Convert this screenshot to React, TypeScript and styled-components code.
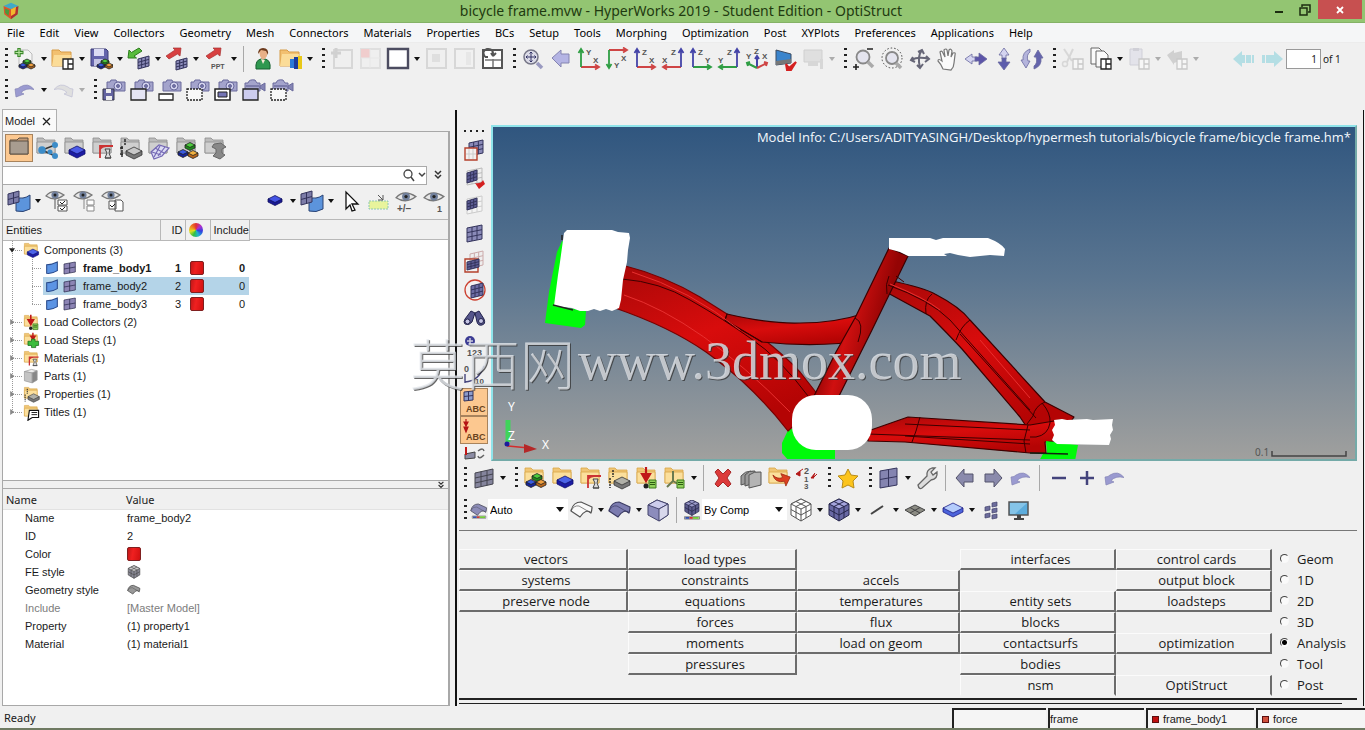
import React from 'react';
import styled, { createGlobalStyle, css } from 'styled-components';

const ui = '"Noto Sans", "Open Sans", sans-serif';
const wide = '"Open Sans", "Noto Sans", sans-serif';
const small = '"Liberation Sans", Arial, sans-serif';

const Global = createGlobalStyle`
  *, *::before, *::after { box-sizing: border-box; }
  body { margin: 0; background: #f0f0f0; color: #1a1a1a; font: 11px/14px ${small}; }
  button, input, select { font: inherit; color: inherit; margin: 0; padding: 0; border: 0; background: none; }
`;

/* ---------- icon building blocks ---------- */

type BlockProps = { x: number; y: number; r: number; d?: number; c: string; side: string; line?: string };
const Block = ({ x, y, r, d = 4, c, side, line = '#222' }: BlockProps) => (
  <g stroke={line} strokeWidth=".8" strokeLinejoin="round">
    <path d={`M${x - r} ${y}v${d}L${x} ${y + r / 2 + d}L${x + r} ${y + d}v${-d}z`} fill={side} />
    <path d={`M${x - r} ${y}L${x} ${y - r / 2}L${x + r} ${y}L${x} ${y + r / 2}z`} fill={c} />
  </g>
);

type PatchProps = { x: number; y: number; w: number; h: number; s?: number; n?: number; fill?: string; line?: string };
const Patch = ({ x, y, w, h, s = 3, n = 3, fill = '#8a8ab8', line = '#34345c' }: PatchProps) => {
  const steps = Array.from({ length: n - 1 }, (_, i) => i + 1);
  return (
    <g stroke={line} strokeWidth="1" fill="none">
      <path d={`M${x} ${y + s}l${w} ${-s}v${h}l${-w} ${s}z`} fill={fill} />
      {steps.map((i) => (
        <path key={i} d={`M${x} ${y + s + (h * i) / n}l${w} ${-s}M${x + (w * i) / n} ${y + s - (s * i) / n}v${h}`} />
      ))}
    </g>
  );
};

const Folder = ({ gray }: { gray?: boolean }) => (
  <g stroke={gray ? '#8d8d8d' : '#d9a648'} strokeWidth=".8">
    <path d="M2 2h6l2 2h10v13H2z" fill={gray ? '#bcbcbc' : '#f0c676'} />
    <path d="M2 6h18v11H2z" fill={gray ? '#cfcfcf' : '#fbdf9c'} />
  </g>
);

const Trio = ({ x, y }: { x: number; y: number }) => (
  <>
    <Block x={x} y={y - 4} r={4} d={2} c="#4ccb3c" side="#1e8a1a" />
    <Block x={x - 4} y={y} r={4} d={2} c="#3a5be0" side="#16249c" />
    <Block x={x + 4} y={y} r={4} d={2} c="#f0a040" side="#b8661a" />
  </>
);

const Camera = ({ video }: { video?: boolean }) => (
  <g stroke="#6a6a9c" strokeWidth="1">
    <path d={video ? 'M3 5h3q1-4 7-3l2 3h3v8H3z' : 'M5 4h3l1-2h5l1 2h8v9H5z'} fill="#a4a4cc" />
    {video && <path d="M18 8l5-3v8l-5-3z" fill="#8484b4" />}
    {video && <path d="M4 8h13" stroke="#55558c" />}
    {!video && <circle cx="16" cy="8" r="4" fill="#d4d4ee" />}
    {!video && <circle cx="16" cy="8" r="1.5" fill="#7474a8" />}
  </g>
);

const Eye = () => (
  <g>
    <path d="M1 7Q8-1 19 6Q10 13 1 7z" fill="#e7e7e7" stroke="#777" strokeWidth="1.2" />
    <circle cx="10" cy="6" r="3.6" fill="#71809c" />
    <circle cx="10" cy="6" r="1.5" fill="#222" />
  </g>
);

const Curl = ({ c = '#9a9ad0' }: { c?: string }) => (
  <path d="M2 11l1 8 8-3-3-1.5q5-5 13-3Q15 4 7 9L5 10.5z" fill={c} stroke="#8484b4" strokeWidth=".7" />
);

const Pane = ({ x = 12, y = 12, c = '#222' }: { x?: number; y?: number; c?: string }) => (
  <path d={`M${x} ${y}h10v10h-10zM${x + 5} ${y}v10M${x + 5} ${y + 5}h5`} fill="#fff" stroke={c} strokeWidth="1.3" />
);

const Note = () => (
  <g>
    <path d="M14 14h7v8h-7z" fill="#8fd05a" stroke="#3c7a1c" />
    <path d="M15 16.5h5M15 18.5h5" stroke="#2c5c12" />
  </g>
);

const Steel = () => (
  <g fill="none">
    <path d="M9 22V10h13M9 13q2-3 6-3" stroke="#c33" strokeWidth="1.8" />
    <path d="M14 22h6M14 13h5l-1 4 2 5h-6l2-5z" stroke="#444" fill="#ddd" />
  </g>
);

const glyph = { fontFamily: 'Liberation Sans', fontWeight: 700, fill: '#555' } as const;

type AxesProps = { h: string; v: string; hl: string; vl: string; left?: boolean; down?: boolean };
const Axes = ({ h, v, hl, vl, left, down }: AxesProps) => {
  const x0 = left ? 20 : 4;
  const y0 = down ? 3 : 20;
  const x1 = left ? 2 : 22;
  const y1 = down ? 21 : 2;
  const dx = left ? 4 : -4;
  const dy = down ? -4 : 4;
  return (
    <g fill="none" strokeWidth="1.8">
      <path d={`M${x0} ${y0}H${x1}M${x1 + dx} ${y0 - 2.5}L${x1} ${y0}L${x1 + dx} ${y0 + 2.5}`} stroke={h} />
      <path d={`M${x0} ${y0}V${y1}M${x0 - 2.5} ${y1 + dy}L${x0} ${y1}L${x0 + 2.5} ${y1 + dy}`} stroke={v} />
      <text x={left ? 1 : 16} y={down ? 14 : 16} fontSize="8" {...glyph}>{hl}</text>
      <text x={left ? 10 : 9} y={down ? 21 : 8} fontSize="8" {...glyph}>{vl}</text>
    </g>
  );
};

const R = '#cf4545';
const G = '#2f9e44';
const B = '#4444a8';

const CubeGrid = ({ fill, top, line = '#26264a' }: { fill: string; top: string; line?: string }) => (
  <g stroke={line} strokeWidth="1" strokeLinejoin="round">
    <path d="M2 6l10-5 10 5v11l-10 6-10-6z" fill={fill} />
    <path d="M2 6l10-5 10 5-10 5z" fill={top} />
    <path d="M12 11v12M7 3.5l10 5V20M17 3.5l-10 5V20M2 11.500l10 5.500 10-5.500" fill="none" />
  </g>
);

const Sheet = ({ fill, line }: { fill: string; line: string }) => (
  <g stroke={line} strokeWidth="1.200" strokeLinejoin="round">
    <path d="M1 13Q3 4 11 4l11 5q0 3-1 6Q16 10 10 19z" fill={fill} />
    <path d="M1 13Q4 7 9 8l12 7" fill="none" strokeWidth=".7" />
  </g>
);

const Binding = () => (
  <g>
    <path d="M3 20h18v3H3z" fill="#eee" stroke="#333" strokeWidth=".6" />
    <path d="M4 21.500h5" stroke="#24a" strokeWidth="2" />
    <path d="M9 21.500h4" stroke="#c22" strokeWidth="2" />
    <path d="M13 21.500h7" stroke="#6c2" strokeWidth="2" />
  </g>
);

const icons: Record<string, React.ReactNode> = {
  logo: <g><path d="M3 6l9-4 9 4-9 4z" fill="#3fa9c8" /><path d="M3 6l9 4v12l-8-6z" fill="#e0522a" /><path d="M21 6l-9 4v12l8-6z" fill="#b03030" /><path d="M12 10l6-3-1 8-5 3z" fill="#f2b72e" /><path d="M5 9l5 2-1 7-4-4z" fill="#4a9a3c" /></g>,
  new: <g><path d="M6 3h9l4 4v14H6z" fill="#f4f4f4" stroke="#bbb" /><path d="M6 1v9M1.5 5.5h9" stroke="#3c8a2c" strokeWidth="3.4" /><path d="M6 2v7M2.5 5.5h7" stroke="#b4e49c" strokeWidth="1.2" /><Trio x={14} y={18} /></g>,
  open: <g><path d="M1 3h7l2 2h10v14H1z" fill="#f2c070" stroke="#d79c46" /><path d="M3 8h17l-2 11H1z" fill="#fbdc98" /><Pane /></g>,
  save: <g><path d="M2 2h15l2 2v15H2z" fill="#6464ac" stroke="#3c3c78" /><path d="M5 2h10v7H5z" fill="#dcdcf4" /><path d="M5 12h9v7H5z" fill="#c4c4e4" /><Trio x={16} y={18} /></g>,
  import: <g><Patch x={11} y={9} w={11} h={10} /><path d="M1 11l1-8 2.5 2.5L12 1l3 3-8 5 2.5 2z" fill="#58bc3c" stroke="#2c7c1c" /></g>,
  export: <g><Patch x={11} y={11} w={11} h={9} /><path d="M1 9l9-6-2-2 8 0-1 8-2.5-2L4 12z" fill="#d84040" stroke="#a83030" strokeWidth=".7" /></g>,
  ppt: <g><path d="M3 9l9-6-2-2 8 0-1 8-2.5-2L6 12z" fill="#d84040" stroke="#a83030" strokeWidth=".7" /><text x="8" y="22" fontSize="7" {...glyph}>PPT</text></g>,
  user: <g><path d="M5 22q-1-9 5-10h4q6 1 5 10z" fill="#2f9850" stroke="#176030" /><path d="M8 4q4-4 8 0v5q-4 7-7 0z" fill="#e8b088" /><path d="M7 7q0-6 5-6 6 0 5 7l-2-4-5-1z" fill="#6c3a1c" /><path d="M10 12l2 5 2-4z" fill="#f8e8d8" /></g>,
  organize: <g><path d="M1 3h7l2 2h10v14H1z" fill="#f2c070" stroke="#d79c46" /><path d="M3 7h17l-2 12H1z" fill="#fbdc98" /><path d="M11 12h4v9h-4z" fill="#2a7ad8" /><path d="M15 10h4v12h-4z" fill="#1c3c9c" /><path d="M19 9h4v13h-4z" fill="#e8c818" /></g>,
  addPage: <g><path d="M4 3h18v18H4z" fill="#eee" stroke="#bbb" strokeWidth="2" /><path d="M6 1v10M1 6h10" stroke="#aaa" strokeWidth="3" /></g>,
  delPage: <g><path d="M3 2h19v19H3z" fill="#eee" stroke="#ccc" strokeWidth="2" /><path d="M3 2h9v9H3z" fill="#f0a4a4" /><path d="M12 2v19M3 11h19" stroke="#ddd" /></g>,
  page: <g><path d="M2 2h20v19H2z" fill="#fff" stroke="#4c4c60" strokeWidth="2.400" /></g>,
  pageLayout: <g><path d="M3 2h19v19H3z" fill="#eee" stroke="#bbb" strokeWidth="2" /><path d="M8 7h8v8H8z" fill="#ccc" /></g>,
  pageSplit: <g><path d="M3 2h19v19H3z" fill="#f4f4f4" stroke="#bbb" strokeWidth="2" /><path d="M14 5h5v13h-5z" fill="#ddd" /></g>,
  swap: <g><path d="M3 3h19v18H3z" fill="#fff" stroke="#555" strokeWidth="2" /><path d="M13 12v8M5 13h16" stroke="#777" strokeWidth="1.500" /><path d="M5 10q-4-6 2-8 7-1 6 7M5 10l3 0M13 9l-2-3M13 9l3-3" fill="none" stroke="#555" strokeWidth="2" /></g>,
  fit: <g><circle cx="10" cy="10" r="7" fill="#dcdce8" stroke="#778" strokeWidth="1.500" /><path d="M16 16l5 5" stroke="#9a9ac0" strokeWidth="3.500" /><path d="M10 5v10M5 10h10M8.500 6.500L10 5l1.500 1.500M8.500 13.500L10 15l1.500-1.500M6.500 8.500L5 10l1.500 1.500M13.500 8.500L15 10l-1.500 1.500" stroke="#336" fill="none" /></g>,
  back: <path d="M3 11l9-8v4h8v9h-8v4z" fill="#b4b4e4" stroke="#8484b0" />,
  xy: <Axes h={R} v={G} hl="X" vl="Y" />,
  xyDown: <Axes h={R} v={G} hl="X" vl="Y" down />,
  xz: <Axes h={R} v={B} hl="X" vl="Z" />,
  xzLeft: <Axes h={R} v={B} hl="X" vl="Z" left />,
  yz: <Axes h={G} v={B} hl="Y" vl="Z" />,
  yzLeft: <Axes h={G} v={B} hl="Y" vl="Z" left />,
  iso: <g fill="none" strokeWidth="2"><path d="M12 20V10" stroke={B} /><path d="M12 21L2 16M3 19l-1-3 3-1" stroke={G} /><path d="M12 21l10-5M19 15l3 1-1 3" stroke={R} /><path d="M10 12l2-3 2 3" stroke={B} /><text x="1" y="12" fontSize="8" {...glyph}>Y</text><text x="9" y="7" fontSize="8" {...glyph}>Z</text><text x="17" y="12" fontSize="8" {...glyph}>X</text></g>,
  view: <g><path d="M3 3l15 4v9L3 18z" fill="#3a84cc" stroke="#3a4a60" /><path d="M3 14l15-2v4L3 18z" fill="#777" /><path d="M13 17l3 4 7-6-5 8h-4z" fill="#d42020" stroke="#d42020" strokeWidth="2" /></g>,
  capture: <g><path d="M3 3h18v12H3z" fill="#ccc" stroke="#aaa" /><path d="M7 15h10v4H7zM19 12h3v10h-3z" fill="#bbb" /></g>,
  zoom: <g><circle cx="11" cy="10" r="6.500" fill="#e4e4ee" stroke="#888" strokeWidth="1.800" /><path d="M16 15l5 5" stroke="#aaa" strokeWidth="3.500" /><path d="M15 2h6M1 20h6M4 17v6" stroke="#222" strokeWidth="1.600" /></g>,
  zoomArea: <g><circle cx="12" cy="11" r="6" fill="#e4e4ee" stroke="#888" strokeWidth="1.800" /><circle cx="12" cy="11" r="10" fill="none" stroke="#444" strokeDasharray="1.500 2" /><path d="M16 16l5 5" stroke="#aaa" strokeWidth="3.500" /></g>,
  rotate: <g fill="none" stroke="#667" strokeWidth="2"><path d="M3 13q8-4 18-1M18 9l3 3-4 3M5 10l-2 3 4 2" /><path d="M14 3q-5 6-2 18M10 5l4-2 2 4M9 18l3 3 3-4" /></g>,
  pan: <path d="M7 22q-2-5-5-8 0-3 4 0L4 5q2-2 3 1l2 4-1-7q2-2 3 0l1 6 1-6q2-2 3 1l-1 6 2-4q3-1 2 2l-1 8q0 4-3 7z" fill="#fafafa" stroke="#777" strokeWidth="1.200" />,
  horiz: <g stroke="#6a6aa0" strokeWidth=".8"><path d="M1 12l7-5v3h5v4H8v3z" fill="#d4d4f0" /><path d="M23 12l-8-6v4h-4v4h4v4z" fill="#5c54a8" /></g>,
  vert: <g stroke="#6a6aa0" strokeWidth=".8"><path d="M12 1l-5 7h3v4h4V8h3z" fill="#d4d4f0" /><path d="M12 23l-6-8h4v-4h4v4h4z" fill="#5c5cac" /></g>,
  spin: <g stroke="#6a6aa0" strokeWidth=".8"><path d="M10 2q-8 3-7 11H1l5 8 4-7H8q-2-6 2-9z" fill="#b4b4dc" /><path d="M14 22q8-3 7-11h2l-5-8-4 7h2q2 6-2 9z" fill="#6464ac" /></g>,
  cut: <g><path d="M3 2l8 12M12 2L6 15" stroke="#bbb" strokeWidth="2" /><circle cx="4" cy="17" r="2.500" fill="none" stroke="#bbb" strokeWidth="1.500" /><Pane c="#999" /></g>,
  copy: <g fill="#fafafa" stroke="#666"><path d="M2 1h8l3 3v13H2z" /><path d="M7 4h8l4 4v12H7z" /><Pane /></g>,
  paste: <g><path d="M3 2h12v16H3z" fill="#d4d4e4" stroke="#aab" /><path d="M6 1h6v3H6z" fill="#aab" /><Pane c="#999" /></g>,
  overlay: <g><path d="M2 8l7-5v3l8-2v9l-8 3v2z" fill="#aaa" /><Pane c="#999" /></g>,
  prev: <g fill="#b4dee4"><path d="M1 12l9-8v4h3v8h-3v4zM14 8h5v8h-5zM20 8h2v8h-2z" /></g>,
  next: <g fill="#b4dee4"><path d="M23 12l-9-8v4H6v8h8v4zM2 8h3v8H2z" /></g>,
  undo: <Curl />,
  redo: <g transform="translate(24 0) scale(-1 1)"><Curl c="#ccc" /></g>,
  camSave: <g><Camera /><path d="M1 11h11v11H1z" fill="#6464a0" stroke="#334" /><path d="M4 11h5v4H4zM4 18h6v4H4z" fill="#eee" /></g>,
  camWin: <g><Camera /><path d="M1 11h15v11H1z" fill="#e4e4f4" stroke="#222" strokeWidth="1.300" /></g>,
  camBar: <g><Camera /><path d="M1 16h14v6H1z" fill="#fff" stroke="#222" strokeWidth="1.300" /></g>,
  camDash: <g><Camera /><path d="M1 11h15v11H1z" fill="#f8f8f8" stroke="#222" strokeDasharray="2 1" strokeWidth="1.300" /></g>,
  camFull: <g><Camera /><path d="M1 11h15v11H1z" fill="#fff" stroke="#222" strokeWidth="1.500" /><path d="M4 14h9v5H4z" fill="#7474b4" stroke="#222" /></g>,
  vidWin: <g><Camera video /><path d="M1 11h15v11H1z" fill="#ccccee" stroke="#222" strokeWidth="1.300" /></g>,
  vidDash: <g><Camera video /><path d="M1 11h15v11H1z" fill="#f8f8f8" stroke="#222" strokeDasharray="2 1" strokeWidth="1.300" /></g>,

  modelView: <g><path d="M3 4h7l2-2h9v16H3z" fill="#c49c78" stroke="#5c5044" /><path d="M3 5h18v13H3z" fill="#a89c90" stroke="#5c5044" /></g>,
  linkView: <g><Folder gray /><path d="M20 9L7 14l13 6" stroke="#333" fill="none" strokeWidth="1.500" /><circle cx="7" cy="14" r="3.800" fill="#3c8cc8" /><circle cx="20" cy="9" r="3" fill="#3c8cc8" /><circle cx="15" cy="16" r="2.500" fill="#3c8cc8" /><circle cx="20" cy="20" r="3" fill="#3c8cc8" /></g>,
  compView: <g><Folder gray /><Block x={14} y={14} r={8} d={4} c="#4c5ce8" side="#1c1ca4" line="#10106c" /></g>,
  matView: <g><Folder gray /><Steel /></g>,
  propView: <g><Folder gray /><path d="M6 3v6M3 10v12M1 12h4M1 18h4" stroke="#222" strokeWidth="1.400" strokeDasharray="3 1" /><Block x={15} y={15} r={8} d={4} c="#c8c8c8" side="#777" line="#333" /></g>,
  meshView: <g><Folder gray /><g fill="#dcdcf4" stroke="#7468b4" strokeWidth="1.200"><path d="M4 16l8-7 10 3-7 8-8 3z" /><path d="M8 12l9 5M13 10l-6 11M18 11l-7 9M5 16l9 3" /></g></g>,
  asmView: <g><Folder gray /><Block x={15} y={9} r={5} d={3} c="#4ccb3c" side="#1e8a1a" /><Block x={8} y={16} r={5} d={3} c="#3a5be0" side="#16249c" /><Block x={18} y={17} r={5} d={3} c="#f0b040" side="#b8661a" /></g>,
  metalView: <g><Folder gray /><path d="M11 8l7-1 5 4-4 2v4l3 2-5 4-7-3 3-3v-4l-4-2z" fill="#888" stroke="#666" /></g>,

  geoMesh: <g><path d="M9 8q7 3 14-2v14q-7 4-14 2z" fill="#5c94dc" stroke="#2c4474" /><Patch x={1} y={2} w={11} h={11} n={2} fill="#7c7ca8" /></g>,
  eyeOn: <g><Eye /><path d="M13 11h9v5h-9zM13 17h9v5h-9zM10 10v10" fill="#fff" stroke="#555" /><path d="M15 13l2 2 3-3M15 19l2 2 3-3" fill="none" stroke="#222" /></g>,
  eyeOff: <g><Eye /><path d="M14 11h7v5h-7zM14 17h7v5h-7zM11 10v10" fill="#fff" stroke="#888" /></g>,
  eyeSwap: <g><Eye /><path d="M8 12h7v8H8zM14 11h6l2 2v9h-8z" fill="#fff" stroke="#555" /><path d="M9 16l2 2 3-3" fill="none" stroke="#222" /></g>,
  comp: <Block x={13} y={10} r={7} d={3} c="#4454e4" side="#181894" line="#10105c" />,
  cursor: <path d="M8 3v17l4-4 2 6 3-1-3-6h6z" fill="#fff" stroke="#111" strokeWidth="1.300" />,
  isolate: <g><path d="M3 12h19v8H3z" fill="#e8f49c" stroke="#8cc8b0" strokeDasharray="2 1" /><path d="M12 6l5 5M17 6v5h-5" stroke="#555" fill="none" /></g>,
  eyePm: <g><g transform="translate(1 1) scale(1.100)"><Eye /></g><text x="3" y="23" fontSize="10" {...glyph}>+/–</text></g>,
  eyeOne: <g><g transform="translate(1 1) scale(1.100)"><Eye /></g><text x="15" y="23" fontSize="9" {...glyph}>1</text></g>,

  maskA: <g><Patch x={7} y={2} w={14} h={13} /><path d="M3 10h12v12H3z" fill="#f4f0f0" stroke="#b4402c" strokeWidth="1.400" /><path d="M7 11v10M11 11v10M4 16h10" stroke="#ccc" /></g>,
  maskB: <g><Patch x={5} y={2} w={15} h={14} fill="#eee" line="#bbb" /><Patch x={5} y={4} w={10} h={10} fill="#5c5c94" /><path d="M13 17q6 1 8-3l2 4-6 5z" fill="#d42020" /></g>,
  maskC: <g><Patch x={5} y={2} w={15} h={15} fill="#f4f4f4" line="#ccc" /><Patch x={5} y={4} w={10} h={9} fill="#5c5c94" /></g>,
  maskD: <Patch x={5} y={3} w={15} h={14} />,
  maskE: <g><Patch x={8} y={1} w={13} h={14} fill="#eee" line="#caa" /><path d="M3 9h13v13H3z" fill="none" stroke="#b4402c" strokeWidth="1.400" /><Patch x={5} y={9} w={12} h={8} fill="#5c5c94" /></g>,
  maskF: <g><circle cx="13" cy="12" r="10" fill="#f4f0f0" stroke="#cc4030" strokeWidth="1.300" /><Patch x={9} y={5} w={12} h={12} fill="#6c6ca4" /></g>,
  find: <g fill="#56568c" stroke="#22224c"><path d="M3 13l6-8 4 2-3 9q-3 4-7 2-2-2 0-5zM13 7l4-2 5 8q2 5-2 6-4 1-5-3z" /><circle cx="5.500" cy="15.500" r="2.500" fill="#c4c4e4" /><circle cx="19" cy="15" r="2.500" fill="#c4c4e4" /></g>,
  number: <g><circle cx="8" cy="7" r="5" fill="#3c3c94" /><path d="M8 4v6M5 7h6" stroke="#ccd" strokeWidth="1.500" /><text x="5" y="22" fontSize="9" {...glyph}>123</text></g>,
  measure: <g><path d="M3 12v9M3 20q14-1 19-16" stroke="#44447c" fill="none" strokeWidth="1.400" /><text x="2" y="10" fontSize="9" {...glyph}>0</text><text x="13" y="22" fontSize="8" {...glyph}>10</text></g>,
  abcMesh: <g><Patch x={2} y={1} w={9} h={9} n={2} s={1} fill="#8c9ccc" /><text x="4" y="22" fontSize="9" {...glyph} fill="#6a4420">ABC</text></g>,
  abcLoad: <g><path d="M4 1v13M2 4L4 8l2-4zM2 9l2 5 2-5z" stroke="#b41414" strokeWidth="1.200" fill="#b41414" /><text x="4" y="22" fontSize="9" {...glyph} fill="#6a4420">ABC</text></g>,
  loadView: <g><path d="M3 8l10-2v6L3 13z" fill="#8c8ca4" stroke="#444" /><path d="M4 1v8" stroke="#c01818" strokeWidth="2" /><path d="M16 5q5-4 6 0M22 9q-5 5-6 1" stroke="#666" strokeWidth="1.500" fill="none" /></g>,

  mesh: <Patch x={3} y={3} w={18} h={15} s={4} fill="#84849c" line="#44444e" />,
  asmFolder: <g><Folder /><Block x={14} y={10} r={5} d={3} c="#4ccb3c" side="#1e8a1a" /><Block x={8} y={16} r={5} d={3} c="#3a5be0" side="#16249c" /><Block x={18} y={16} r={5} d={3} c="#f0a040" side="#b8661a" /></g>,
  compFolder: <g><Folder /><Block x={14} y={14} r={8} d={4} c="#4c64e8" side="#1c1ca4" line="#10106c" /></g>,
  matFolder: <g><Folder /><Steel /></g>,
  propFolder: <g><Folder /><path d="M6 4v7M3 12v10" stroke="#222" strokeWidth="1.400" strokeDasharray="2 1" /><Block x={15} y={15} r={8} d={4} c="#b0b0a8" side="#777" line="#333" /></g>,
  loadFolder: <g><Folder /><path d="M11 1v9M7 8l4 7 4-7z" stroke="#c01818" strokeWidth="2.200" fill="#c01818" /><circle cx="11" cy="20" r="2.500" fill="#222" /><Note /></g>,
  stepFolder: <g><Folder /><path d="M14 1v8M11 6l3 5 3-5z" stroke="#c01818" strokeWidth="2" fill="#c01818" /><path d="M7 13h5v-3h5v3h5v6h-4v3h-6v-3H7z" fill="#3cbc3c" stroke="#146414" /></g>,
  sysFolder: <g><Folder /><path d="M10 5v10l-6 6M10 15l5 3" stroke="#6a7a50" strokeWidth="2" fill="none" /><Note /></g>,
  titleFolder: <g><Folder /><path d="M9 9h13v10h-9l-6 4z" fill="#fff" stroke="#111" strokeWidth="1.600" /><path d="M12 12h8M12 15h8" stroke="#111" strokeWidth="1.300" /></g>,
  part: <g stroke="#999"><path d="M2 5l10-3 8 2-7 3z" fill="#eee" /><path d="M2 5l11 2v14l-11-3z" fill="#c4c4c4" /><path d="M20 4l-7 3v14l7-4z" fill="#888" /></g>,
  delete: <path d="M4 6l3-3 5 5 5-5 3 3-4 6 4 6-3 3-5-5-5 5-3-3 4-6z" fill="#dc3a3a" stroke="#a82828" />,
  cards: <g fill="#9a9a9a" stroke="#555"><path d="M2 10q4-5 10-5v11l-10 3z" /><path d="M6 9q4-5 10-4v12l-10 3z" /><path d="M10 9q5-4 12-3v13l-12 3z" fill="#b4b4b4" /></g>,
  moveFolder: <g><Folder /><path d="M5 12q6 3 10-1l-3-3h10l-1 10-3-4q-8 5-13-2z" fill="#dc4020" stroke="#9c2810" strokeWidth=".7" transform="rotate(20 14 13)" /></g>,
  renumber: <g><text x="9" y="8" fontSize="9" {...glyph}>2</text><text x="9" y="16" fontSize="8" {...glyph}>1</text><text x="9" y="23" fontSize="8" {...glyph}>3</text><path d="M1 8l4-3v5zM5 5l3-2M22 8l-4 4M20 7l-4 5 3 0" stroke="#b41818" fill="#b41818" /></g>,
  star: <path d="M12 3l3 6 7 1-5 5 1 7-6-3-6 3 1-7-5-5 7-1z" fill="#fcc41c" stroke="#b88c18" />,
  panes: <Patch x={3} y={2} w={17} h={17} n={2} s={3} fill="#8484b0" />,
  wrench: <path d="M3 19l9-9q-1-6 5-8l3 0-4 4 2 3 4-3q1 7-6 8l-9 8q-3 2-4-3z" fill="#ddd" stroke="#666" strokeWidth="1.300" />,
  left: <path d="M3 12l8-9v5h9v8h-9v5z" fill="#8a8aac" stroke="#55556c" />,
  right: <path d="M21 12l-8-9v5H4v8h9v5z" fill="#8a8aac" stroke="#55556c" />,
  minus: <path d="M5 12h14" stroke="#44447c" strokeWidth="2.500" />,
  plus: <path d="M5 12h14M12 5v14" stroke="#44447c" strokeWidth="2.500" />,

  autoSheet: <g><Sheet fill="#8c8cb8" line="#556" /><Binding /></g>,
  wireSheet: <Sheet fill="#fafafa" line="#555" />,
  solidSheet: <Sheet fill="#7c7cb0" line="#3c3c64" />,
  geoStyle: <Sheet fill="#999" line="#444" />,
  solid: <g stroke="#44446c"><path d="M2 7l9-5 11 4v11l-9 6-11-6z" fill="#8c8cbc" /><path d="M2 7l9-5 11 4-9 5z" fill="#ccccec" /><path d="M13 11l9-5v11l-9 6z" fill="#d8d8ec" /></g>,
  compCube: <g><g transform="scale(.850) translate(2 -1)"><CubeGrid fill="#5c5c8c" top="#9c9ccc" /></g><Binding /></g>,
  wireCube: <CubeGrid fill="#fff" top="#fff" line="#555" />,
  solidCube: <CubeGrid fill="#6868a4" top="#a4a4dc" />,
  feStyle: <CubeGrid fill="#888894" top="#ccc" line="#444" />,
  bar: <path d="M6 16l12-8" stroke="#444" strokeWidth="2" />,
  shell: <g stroke="#444"><path d="M2 12l10-5 10 5-10 6z" fill="#8c8c84" /><path d="M7 9.500l10 5.500M17 9.500L7 15" /></g>,
  slab: <Block x={12} y={10} r={10} d={4} c="#b4ccfc" side="#4c64dc" line="#1c1c84" />,
  scatter: <g fill="#6c6c9c" stroke="#44446c" strokeWidth=".7"><path d="M13 5l5-1v4l-5 1zM6 9l5-1v4l-5 1zM13 11l5-1v4l-5 1zM6 16l5-1v4l-5 1zM13 17l5-1v4l-5 1z" /></g>,
  monitor: <g><path d="M2 4h19v13H2z" fill="#5cacdc" stroke="#555" strokeWidth="1.500" /><path d="M3 5h17L8 16H3z" fill="#a0d4f0" opacity=".6" /><path d="M10 17h4v3h3v2H7v-2h3z" fill="#444" /></g>,
  surf: <path d="M4 7q8 0 16-4v13q-8 5-16 4z" fill="#5c94e4" stroke="#2c4c8c" strokeWidth="1.600" />,
  elem: <Patch x={3} y={3} w={17} h={15} n={2} fill="#8c84b4" line="#222244" />,
};

const IconSvg = styled.svg`
  display: block;
  flex: none;
`;
const Icon = ({ name, size = 24 }: { name: string; size?: number }) => (
  <IconSvg width={size} height={size} viewBox="0 0 24 24" aria-hidden="true">{icons[name]}</IconSvg>
);

/* ---------- toolbars ---------- */

const ToolRow = styled.div<{ $h: number }>`
  display: flex;
  align-items: center;
  height: ${(p) => p.$h}px;
`;

const Grip = styled.span<{ $side?: boolean }>`
  flex: none;
  width: 3px;
  height: 22px;
  margin: 0 3px 0 7px;
  background: repeating-linear-gradient(#222 0 2px, transparent 2px 6px);
  &:first-child { margin-left: 5px; }
  ${(p) => p.$side && css`
    &&& {
      display: block;
      width: 22px;
      height: 2px;
      margin: 5px 0 4px 4px;
    }
    background: repeating-linear-gradient(90deg, #222 0 2px, transparent 2px 6px);
  `}
`;

const Divider = styled.span`
  flex: none;
  width: 1px;
  height: 26px;
  margin: 0 5px 0 4px;
  background: #a8a8a8;
`;

const ToolButton = styled.button<{ $on?: boolean }>`
  display: flex;
  align-items: center;
  justify-content: center;
  flex: none;
  width: 28px;
  height: 28px;
  &:disabled { opacity: 0.45; }
  ${(p) => p.$on && css`
    background: #fcc890;
    border: 1px solid #a8835c;
  `}
`;

const DropButton = styled.button`
  flex: none;
  display: flex;
  align-items: center;
  justify-content: center;
  width: 10px;
  height: 28px;
  &::before {
    content: '';
    border: 3px solid transparent;
    border-top: 4px solid #111;
    border-bottom: 0;
  }
  &:disabled { opacity: 0.3; }
`;

const Tools = ({ items }: { items: string }) => (
  <>
    {items.split(' ').map((raw, i) => {
      const off = raw.startsWith('-');
      const on = raw.startsWith('*');
      const name = off || on ? raw.slice(1) : raw;
      if (name === '|') return <Divider key={i} />;
      if (name === ':') return <Grip key={i} />;
      if (name === 'v') return <DropButton key={i} type="button" aria-label="More options" disabled={off} />;
      return (
        <ToolButton key={i} type="button" aria-label={name} disabled={off} $on={on}>
          <Icon name={name} />
        </ToolButton>
      );
    })}
  </>
);

/* ---------- window frame ---------- */

const Window = styled.div`
  display: flex;
  flex-direction: column;
  min-height: 100vh;
`;

const TitleBar = styled.header`
  display: grid;
  grid-template-columns: 1fr auto 1fr;
  height: 23px;
  padding: 0 3px 0 0;
  background: #93c572;
  border-bottom: 1px solid #84b266;
`;
const Logo = styled.div`
  padding: 1px 0 0 1px;
`;
const Title = styled.h1`
  margin: 0;
  font: 400 14px/22px ${ui};
  color: #1f3a10;
`;
const WindowButtons = styled.div`
  display: flex;
  justify-content: flex-end;
`;
const WinButton = styled.button<{ $close?: boolean }>`
  display: flex;
  align-items: center;
  justify-content: center;
  width: ${(p) => (p.$close ? 44 : 26)}px;
  height: 19px;
  background: ${(p) => (p.$close ? '#c75050' : 'transparent')};
`;

const MenuBar = styled.nav`
  display: flex;
  gap: 15px;
  height: 20px;
  padding-left: 7px;
  background: #f5f6f7;
  border-bottom: 1px solid #ececec;
  font: 11px/19px ${ui};
  color: #000;
`;

const Pager = styled.label`
  display: flex;
  align-items: center;
  gap: 2px;
  font: 10px/18px ${ui};
  input {
    width: 35px;
    height: 20px;
    padding-right: 3px;
    border: 1px solid #999;
    background: #fff;
    text-align: right;
  }
`;
const Gap = styled.span`
  width: 29px;
`;

const Main = styled.main`
  display: flex;
  flex: 1;
`;

/* ---------- model browser ---------- */

const Dock = styled.section`
  display: flex;
  flex-direction: column;
  flex: none;
  width: 450px;
  padding: 4px 0 2px 2px;
`;
const Tab = styled.div`
  display: flex;
  align-items: center;
  gap: 7px;
  width: 55px;
  height: 23px;
  margin-bottom: -1px;
  padding-left: 2px;
  background: #fafafa;
  border: 1px solid #b0b0b0;
  border-bottom: 0;
  button { display: flex; }
`;
const DockBody = styled.div`
  display: flex;
  flex-direction: column;
  flex: 1;
  border: 1px solid #a8a8a8;
  border-right-width: 2px;
`;
const SearchRow = styled.div`
  display: flex;
  align-items: center;
  height: 20px;
  padding-right: 5px;
`;
const SearchBox = styled.div`
  display: flex;
  align-items: center;
  flex: 1;
  height: 19px;
  margin-right: 6px;
  background: #fff;
  border: 1px solid #aaa;
  border-left: 0;
  input { flex: 1; min-width: 0; height: 17px; padding-left: 4px; outline: 0; }
`;
const Push = styled.span`
  flex: 1;
`;
const ViewRow = styled(ToolRow)`
  padding: 0 0 2px 2px;
`;

const TreeBox = styled.div`
  flex: 1;
  background: linear-gradient(#b8b8b8 1px, #f0f0f0 1px 20px, #b8b8b8 20px 21px, #fff 21px);
`;
const Tree = styled.table`
  table-layout: fixed;
  width: 246px;
  border-collapse: collapse;
  th {
    height: 21px;
    padding: 0 2px 0 3px;
    border: solid #b8b8b8;
    border-width: 1px 1px 1px 0;
    background: #f0f0f0;
    font-weight: 400;
    text-align: left;
  }
  td { height: 18px; padding: 0; }
`;
const NumHead = styled.span`
  display: block;
  text-align: right;
`;
const NumCell = styled.td<{ $sel?: boolean; $bold?: boolean }>`
  text-align: right;
  background: ${(p) => (p.$sel ? '#b4d4e8' : 'none')};
  font-weight: ${(p) => (p.$bold ? 700 : 400)};
  && { padding-right: 4px; }
`;
const Node = styled.div<{ $child?: boolean; $sel?: boolean; $bold?: boolean }>`
  display: flex;
  align-items: center;
  gap: ${(p) => (p.$child ? 2 : 4)}px;
  height: 18px;
  margin-left: ${(p) => (p.$child ? 40 : 20)}px;
  padding-left: ${(p) => (p.$child ? 1 : 0)}px;
  background: ${(p) => (p.$sel ? '#b4d4e8' : 'none')};
  font-weight: ${(p) => (p.$bold ? 700 : 400)};
  white-space: nowrap;
  span { padding-left: ${(p) => (p.$child ? 3 : 0)}px; }
`;
const dots = 'repeating-linear-gradient(#999 0 1px, transparent 1px 2px)';
const NodeCell = styled.td<{ $child?: boolean; $end?: boolean }>`
  position: relative;
  background:
    ${dots} 9px 0 / 1px ${(p) => (p.$end && !p.$child ? '9px' : '100%')} no-repeat,
    repeating-linear-gradient(90deg, #999 0 1px, transparent 1px 2px) ${(p) => (p.$child ? 29 : 10)}px 9px / 10px 1px no-repeat
    ${(p) => p.$child && css`, ${dots} 29px 0 / 1px ${p.$end ? '9px' : '100%'} no-repeat`};
`;
const Twisty = styled.button<{ $open?: boolean }>`
  position: absolute;
  left: 6px;
  top: 6px;
  width: 6px;
  height: 6px;
  background: ${(p) => (p.$open ? '#222' : '#888')};
  clip-path: ${(p) => (p.$open ? 'polygon(0 20%, 100% 20%, 50% 90%)' : 'polygon(20% 0, 90% 50%, 20% 100%)')};
`;
const Swatch = styled.span`
  display: block;
  width: 14px;
  height: 14px;
  background: linear-gradient(100deg, #c01818, #f02020 40%, #d01010);
  border: 1px solid #802020;
  border-radius: 2px;
`;
const SwatchCell = styled.td<{ $sel?: boolean }>`
  background: ${(p) => (p.$sel ? '#b4d4e8' : 'none')};
  ${Swatch} { margin-left: 5px; }
`;
const Wheel = styled.span`
  display: block;
  width: 14px;
  height: 14px;
  border-radius: 50%;
  background: conic-gradient(#e03030, #b030d0, #3040e0, #20b0d0, #30c040, #e0e020, #f08020, #e03030);
`;

const Splitter = styled.div`
  display: flex;
  justify-content: flex-end;
  align-items: center;
  height: 9px;
  padding-right: 3px;
  border-top: 1px solid #a8a8a8;
  border-bottom: 1px solid #a8a8a8;
`;
const Props = styled.div`
  flex: 0 0 216px;
  background: #fff;
`;
const PropTable = styled.table`
  width: 100%;
  table-layout: fixed;
  border-collapse: collapse;
  th {
    height: 20px;
    padding: 3px 0 0 3px;
    background: #f0f0f0;
    border-bottom: 1px solid #e2e2e2;
    font: 11px/14px ${ui};
    text-align: left;
  }
  td { height: 18px; padding: 0 0 0 4px; }
  td:first-child { padding-left: 22px; }
`;
const PropRow = styled.tr<{ $dim?: boolean }>`
  color: ${(p) => (p.$dim ? '#7c7c7c' : 'inherit')};
`;

/* ---------- graphics area ---------- */

const Work = styled.section`
  display: flex;
  flex-direction: column;
  flex: 1;
  min-width: 0;
  margin: 5px 1px 2px 5px;
  padding: 15px 0 0 2px;
  border-left: 2px solid #111;
  border-right: 1px solid #111;
`;
const Stage = styled.div`
  position: relative;
  display: flex;
  flex: 1 1 300px;
  min-height: 0;
  padding-right: 6px;
`;
const SideBar = styled.div`
  position: relative;
  flex: none;
  width: 32px;
`;
const SideTools = styled.div`
  position: absolute;
  inset: 0;
  padding-left: 1px;
  overflow: hidden;
`;
const Canvas = styled.div`
  position: relative;
  flex: 1;
  min-width: 0;
  border: 2px solid #8fe4ea;
  border-right-color: #74aaa8;
  border-bottom-color: #74aaa8;
  background: linear-gradient(#30567f, #5a7590 45%, #a0a09e);
`;
const Scene = styled.svg`
  position: absolute;
  inset: 0;
  width: 100%;
  height: 100%;
`;
const ModelInfo = styled.p`
  position: absolute;
  top: 1px;
  right: 4px;
  margin: 0;
  font: 13px/18px ${wide};
  color: #f4f8fc;
`;
const Watermark = styled.div`
  position: absolute;
  left: -49px;
  top: 204px;
  display: flex;
  align-items: center;
  gap: 3px;
  height: 64px;
  color: rgba(226, 230, 235, 0.8);
  text-shadow: 1px 1px 0 rgba(50, 50, 50, 0.75);
  font: 300 55px/64px "Noto Sans CJK SC", sans-serif;
  white-space: nowrap;
  pointer-events: none;
  b { font: 400 54px/64px "Liberation Serif", serif; }
`;

const Frame = () => (
  <Scene viewBox="493 127 861 332" preserveAspectRatio="xMinYMin meet" role="img" aria-label="Bicycle frame model">
    <defs>
      <linearGradient id="tube" x1="0" y1="0" x2="0.500" y2="1">
        <stop offset="0" stopColor="#a80808" /><stop offset=".5" stopColor="#d80c0c" /><stop offset="1" stopColor="#b40404" />
      </linearGradient>
      <linearGradient id="seat" x1="0" y1="0" x2="1" y2=".4">
        <stop offset=".3" stopColor="#8c0404" /><stop offset=".5" stopColor="#d01010" /><stop offset=".8" stopColor="#940404" />
      </linearGradient>
    </defs>
    <g fill="#00fa0a">
      <path d="M562 241L568 244 556 306 586 311 585 325 581 328 545 323 549 292 557 252z" />
      <path d="M789 428l-7 15 0 10 7 8 46 0 0-16z" />
    </g>
    <g stroke="#3c0000" strokeWidth="1.200" strokeLinejoin="round">
      <path d="M622 265Q665 276 700 297L727 314Q772 342 800 372L822 400 788 431Q768 405 742 381Q720 362 706 352Q670 327 615 308z" fill="url(#tube)" stroke="#700" />
      <path d="M727 314Q770 324 800 323Q835 323 862 314L866 340Q820 348 762 342Q742 330 725 320z" fill="url(#tube)" />
      <path d="M888 280Q925 288 935 294Q960 307 970 320L1045 402 1074 417 1058 440 1030 432 1020 417 962 349Q948 334 930 316L886 292z" fill="url(#tube)" />
      <path d="M889 248L855 318 836 352 813 398 838 398 872 330 908 256z" fill="url(#seat)" />
      <path d="M868 431L908 417 1030 425 1060 420 1055 441 1045 442 1046 453 1030 453 905 442 868 441z" fill="url(#tube)" />
    </g>
    <path d="M1046 441l32 4-3 16-36 0 4-7 4-1z" fill="#00fa0a" />
    <g fill="none" stroke="#3c0000" strokeWidth="1">
      <path d="M622 279Q660 282 690 300Q725 320 750 338Q780 358 808 396M727 314q-3 5 0 8q22 12 35 20M855 318q10 4 3 24M889 276q-4 8-2 18M896 276l8 6M932 294q-8 6-6 20M970 320q-9 6-14 20M888 285Q930 300 950 320L1030 410M960 334L1036 418M1045 402q-10 4-12 14l-6 8M1042 403q9 10 8 20q-2 12-14 14l-6 0M868 434L1030 440M905 424l125 6M905 436l125 8M920 417l-4 14-4 11M1028 425l-4 16 2 12" />
      <path d="M632 272Q690 290 740 330M624 295Q700 320 790 412M890 284Q925 298 940 310M980 340L1030 398" stroke="#e83030" />
      <path d="M1030 453l38 1" stroke="#121" strokeWidth="1.500" />
    </g>
    <g fill="#fff">
      <path d="M564 233L567 230 612 230 618 232 629 233 630 238 628 250 627 262 623 280 621 300 619 308 612 311 606 309 600 311 594 309 588 311 580 311 572 308 554 306 555 298 558 275 560 262z" />
      <rect x="792" y="395" width="80" height="55" rx="24" />
      <path d="M889 238L930 238 936 240 943 238 988 238Q1001 243 1005 249L1004 256 990 255 970 257 958 255 950 253 944 254 947 256 908 256 900 252 889 249z" />
      <path d="M1054 420l8-1 5 1 20-1 6 1 20-1-1 6 1 5-3 5 1 4-2 6-52-1-5-4 2-5-2-5 3-5z" />
    </g>
    <path d="M562 235v5M553 305l20 5" stroke="#222" strokeWidth="1.500" />
    <g>
      <path d="M508 442v-22" stroke="#3fd45a" strokeWidth="5" />
      <path d="M507 446l22 2" stroke="#d42c2c" strokeWidth="1.500" />
      <path d="M524 444l13 5-13 4z" fill="#b42828" />
      <circle cx="507" cy="444" r="2.500" fill="#1c1c9c" />
      <g fill="#fff" fontFamily="Noto Sans" fontSize="12">
        <text x="508" y="411">Y</text><text x="508" y="440">Z</text><text x="542" y="449">X</text>
      </g>
    </g>
    <path d="M1272 451v5h74v-5" stroke="#444" strokeWidth="1.500" fill="none" />
    <text x="1255" y="456" fontFamily="Noto Sans" fontSize="10" fill="#555">0.1</text>
  </Scene>
);

const Combo = styled.label<{ $w: number }>`
  display: flex;
  align-items: center;
  flex: none;
  width: ${(p) => p.$w}px;
  height: 21px;
  select {
    flex: 1;
    height: 21px;
    padding-left: 2px;
    appearance: none;
    border-radius: 0;
    color: #000;
    background: #fff;
  }
`;
const ComboArrow = styled.span`
  width: 0;
  margin: 0 4px 0 -12px;
  border: 4px solid transparent;
  border-top: 5px solid #111;
  border-bottom: 0;
  pointer-events: none;
`;

/* ---------- command panel ---------- */

const Panel = styled.div`
  display: flex;
  margin: 5px 6px 0 0;
  padding: 18px 0 2px;
  border-top: 1px solid #777;
  font: 13px/18px ${wide};
`;
const Commands = styled.div`
  display: grid;
  grid-template-columns: 169fr 169fr 163fr 156fr 156fr;
  grid-auto-rows: 21px;
  flex: 1;
`;
const Command = styled.button<{ $last?: boolean }>`
  padding-left: 6px;
  border: solid #6c6c6c;
  border-width: 1px 2px 2px 1px;
  border-top-color: #fbfbfb;
  border-left-color: #fbfbfb;
  border-bottom-color: ${(p) => (p.$last ? 'transparent' : '#6c6c6c')};
  line-height: 18px;
`;
const Modes = styled.fieldset`
  flex: none;
  width: 85px;
  margin: 0;
  padding: 0 0 0 8px;
  border: 0;
  label { display: flex; align-items: center; gap: 8px; height: 21px; padding-bottom: 2px; }
  input {
    appearance: none;
    width: 9px;
    height: 9px;
    border: 1px solid #444;
    border-right-color: transparent;
    border-bottom-color: transparent;
    border-radius: 50%;
    background: #fafafa;
  }
  input:checked { background: radial-gradient(#000 0 2px, #fafafa 3px); }
`;
const Rules = styled.div`
  height: 8px;
  margin-right: 6px;
  border-top: 2px solid #222;
  &::after {
    content: '';
    display: block;
    margin: 3px 15px 0 0;
    border-top: 1px solid #222;
  }
`;

const Status = styled.footer`
  display: flex;
  height: 22px;
  border-bottom: 2px solid #6f7a62;
  font-size: 11px;
  line-height: 20px;
`;
const Ready = styled.span`
  flex: 1;
  padding-left: 4px;
  font: 11px/20px ${ui};
`;
const StatusCell = styled.span<{ $w: number }>`
  display: flex;
  align-items: center;
  gap: 4px;
  width: ${(p) => p.$w}px;
  margin-left: 2px;
  padding-left: ${(p) => (p.$w < 97 ? 0 : 4)}px;
  border-top: 2px solid #222;
  border-left: 2px solid #222;
  background: #f5f5f5;
`;
const Chip = styled.i<{ $c: string }>`
  width: 7px;
  height: 7px;
  border: 1px solid #5c1010;
  background: ${(p) => p.$c};
`;

const menus = ['File', 'Edit', 'View', 'Collectors', 'Geometry', 'Mesh', 'Connectors', 'Materials', 'Properties', 'BCs', 'Setup', 'Tools', 'Morphing', 'Optimization', 'Post', 'XYPlots', 'Preferences', 'Applications', 'Help'];

const bodies = [
  { name: 'frame_body1', id: 1, bold: true },
  { name: 'frame_body2', id: 2, sel: true },
  { name: 'frame_body3', id: 3 },
];
const groups = [
  ['loadFolder', 'Load Collectors (2)'],
  ['stepFolder', 'Load Steps (1)'],
  ['matFolder', 'Materials (1)'],
  ['part', 'Parts (1)'],
  ['propFolder', 'Properties (1)'],
  ['titleFolder', 'Titles (1)'],
];
const details: [string, React.ReactNode, boolean?][] = [
  ['Name', 'frame_body2'],
  ['ID', '2'],
  ['Color', <Swatch key="c" />],
  ['FE style', <Icon key="f" name="feStyle" size={14} />],
  ['Geometry style', <Icon key="g" name="geoStyle" size={14} />],
  ['Include', '[Master Model]', true],
  ['Property', '(1) property1'],
  ['Material', '(1) material1'],
];
const commands = [
  ['vectors', 'load types', '', 'interfaces', 'control cards'],
  ['systems', 'constraints', 'accels', '', 'output block'],
  ['preserve node', 'equations', 'temperatures', 'entity sets', 'loadsteps'],
  ['', 'forces', 'flux', 'blocks', ''],
  ['', 'moments', 'load on geom', 'contactsurfs', 'optimization'],
  ['', 'pressures', '', 'bodies', ''],
  ['', '', '', 'nsm', 'OptiStruct'],
];
const modes = ['Geom', '1D', '2D', '3D', 'Analysis', 'Tool', 'Post'];
const sideTools = ['maskA', 'maskB', 'maskC', 'maskD', 'maskE', 'maskF', 'find', 'number', 'measure', 'abcMesh', 'abcLoad', 'loadView'];

const DoubleChevron = ({ size = 10 }: { size?: number }) => (
  <svg width={size} height={size} viewBox="0 0 10 10" aria-hidden="true">
    <path d="M2 1l3 3 3-3M2 5l3 3 3-3" fill="none" stroke="#333" strokeWidth="1.500" />
  </svg>
);

export default function App() {
  return (
    <Window>
      <Global />
      <TitleBar>
        <Logo><Icon name="logo" size={20} /></Logo>
        <Title>bicycle frame.mvw - HyperWorks 2019 - Student Edition - OptiStruct</Title>
        <WindowButtons>
          <WinButton type="button" aria-label="Minimize"><svg width="12" height="12"><path d="M2 8h8" stroke="#1c2c10" strokeWidth="2" /></svg></WinButton>
          <WinButton type="button" aria-label="Restore"><svg width="12" height="12"><path d="M1 4h7v7H1zM3 3V1h8v7H9" fill="none" stroke="#1c2c10" strokeWidth="1.500" /></svg></WinButton>
          <WinButton type="button" aria-label="Close" $close><svg width="10" height="10"><path d="M2 2l6 6M8 2l-6 6" stroke="#fff" strokeWidth="1.800" /></svg></WinButton>
        </WindowButtons>
      </TitleBar>
      <MenuBar>{menus.map((m) => <button type="button" key={m}>{m}</button>)}</MenuBar>
      <ToolRow $h={31}>
        <Tools items=": new v open v save v import v export v ppt v | user organize v : -addPage -delPage page v -pageLayout -pageSplit swap : fit back xy xyDown xz xzLeft yz yzLeft iso view -capture -v : zoom zoomArea rotate pan horiz vert spin : -cut copy v -paste -v -overlay -v" />
        <Gap />
        <Tools items="prev next" />
        <Pager><input defaultValue="1" aria-label="Page" /> of 1</Pager>
      </ToolRow>
      <ToolRow $h={31}>
        <Tools items=": undo v -redo -v : camSave camWin camBar camDash camFull vidWin vidDash" />
      </ToolRow>

      <Main>
        <Dock>
          <Tab>
            Model
            <button type="button" aria-label="Close tab"><svg width="9" height="9"><path d="M1 1l7 7M8 1L1 8" stroke="#222" strokeWidth="1.300" /></svg></button>
          </Tab>
          <DockBody>
            <ViewRow $h={33}>
              <Tools items="*modelView linkView compView matView propView meshView asmView metalView" />
            </ViewRow>
            <SearchRow>
              <SearchBox>
                <input type="search" aria-label="Search entities" />
                <svg width="26" height="14" aria-hidden="true">
                  <circle cx="8" cy="6" r="4" fill="none" stroke="#444" strokeWidth="1.300" /><path d="M11 9l3 4M19 5l3 3 3-3" fill="none" stroke="#444" strokeWidth="1.500" />
                </svg>
              </SearchBox>
              <DoubleChevron />
            </SearchRow>
            <ViewRow $h={34}>
              <Tools items="geoMesh v eyeOn eyeOff eyeSwap" />
              <Push />
              <Tools items="comp v geoMesh v cursor isolate eyePm eyeOne" />
            </ViewRow>
            <TreeBox>
              <Tree>
                <colgroup><col width="157" /><col width="25" /><col width="25" /><col width="39" /></colgroup>
                <thead>
                  <tr><th>Entities</th><th><NumHead>ID</NumHead></th><th><Wheel /></th><th>Include</th></tr>
                </thead>
                <tbody>
                  <tr>
                    <NodeCell><Twisty type="button" $open aria-label="Collapse" /><Node><Icon name="compFolder" size={17} />Components (3)</Node></NodeCell>
                    <td /><td /><td />
                  </tr>
                  {bodies.map((b, i) => (
                    <tr key={b.id}>
                      <NodeCell $child $end={i === bodies.length - 1}><Node $child $sel={b.sel} $bold={b.bold}><Icon name="surf" size={16} /><Icon name="elem" size={16} /><span>{b.name}</span></Node></NodeCell>
                      <NumCell $sel={b.sel} $bold={b.bold}>{b.id}</NumCell>
                      <SwatchCell $sel={b.sel}><Swatch /></SwatchCell>
                      <NumCell $sel={b.sel} $bold={b.bold}>0</NumCell>
                    </tr>
                  ))}
                  {groups.map(([icon, label], i) => (
                    <tr key={label}>
                      <NodeCell $end={i === groups.length - 1}><Twisty type="button" aria-label="Expand" /><Node><Icon name={icon} size={17} />{label}</Node></NodeCell>
                      <td /><td /><td />
                    </tr>
                  ))}
                </tbody>
              </Tree>
            </TreeBox>
            <Splitter><DoubleChevron size={8} /></Splitter>
            <Props>
              <PropTable>
                <colgroup><col width="120" /><col /></colgroup>
                <thead><tr><th>Name</th><th>Value</th></tr></thead>
                <tbody>
                  {details.map(([k, v, dim]) => <PropRow key={k} $dim={dim}><td>{k}</td><td>{v}</td></PropRow>)}
                </tbody>
              </PropTable>
            </Props>
          </DockBody>
        </Dock>

        <Work>
          <Stage>
            <SideBar>
              <SideTools>
                <Grip $side />
                {sideTools.map((t) => (
                  <ToolButton key={t} type="button" aria-label={t} $on={t.startsWith('abc')}><Icon name={t} /></ToolButton>
                ))}
              </SideTools>
            </SideBar>
            <Canvas>
              <Frame />
              <ModelInfo>Model Info: C:/Users/ADITYASINGH/Desktop/hypermesh tutorials/bicycle frame/bicycle frame.hm*</ModelInfo>
            </Canvas>
            <Watermark>莫西网<b>www.3dmox.com</b></Watermark>
          </Stage>
          <ToolRow $h={33}>
            <Tools items=": mesh v : asmFolder compFolder matFolder propFolder loadFolder sysFolder v | delete cards moveFolder renumber : star : panes v wrench | left right undo | minus plus undo" />
          </ToolRow>
          <ToolRow $h={31}>
            <Grip />
            <Combo $w={98} aria-label="Geometry colour mode">
              <Icon name="autoSheet" size={18} />
              <select defaultValue="Auto"><option>Auto</option></select>
              <ComboArrow />
            </Combo>
            <Tools items="wireSheet v solidSheet v solid |" />
            <Combo $w={105} aria-label="Element colour mode">
              <Icon name="compCube" size={20} />
              <select defaultValue="By Comp"><option>By Comp</option></select>
              <ComboArrow />
            </Combo>
            <Tools items="wireCube v solidCube v bar v shell v slab v scatter monitor" />
          </ToolRow>
          <Panel>
            <Commands>
              {commands.flatMap((row, r) => row.map((c, i) => (
                c ? <Command key={`${r}-${i}`} type="button" $last={r === 6}>{c}</Command> : <span key={`${r}-${i}`} />
              )))}
            </Commands>
            <Modes>
              {modes.map((m) => <label key={m}><input type="radio" name="mode" defaultChecked={m === 'Analysis'} />{m}</label>)}
            </Modes>
          </Panel>
          <Rules />
        </Work>
      </Main>

      <Status>
        <Ready>Ready</Ready>
        <StatusCell $w={94} />
        <StatusCell $w={96}>frame</StatusCell>
        <StatusCell $w={108}><Chip $c="#c01010" />frame_body1</StatusCell>
        <StatusCell $w={109}><Chip $c="#d0503c" />force</StatusCell>
      </Status>
    </Window>
  );
}
